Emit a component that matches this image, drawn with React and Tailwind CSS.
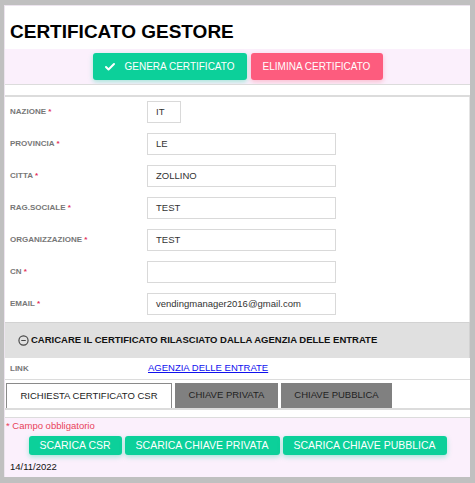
import React from 'react'
import { Check, CircleMinus } from 'lucide-react'

const fields = [
  { label: 'NAZIONE', value: 'IT', short: true },
  { label: 'PROVINCIA', value: 'LE' },
  { label: 'CITTA', value: 'ZOLLINO' },
  { label: 'RAG.SOCIALE', value: 'TEST' },
  { label: 'ORGANIZZAZIONE', value: 'TEST' },
  { label: 'CN', value: '' },
  { label: 'EMAIL', value: 'vendingmanager2016@gmail.com' },
]

function Field({ label, value, short }) {
  return (
    <div className="flex items-center h-[22px]">
      <div className="w-[142px] pl-[5px] text-[8px] font-bold text-[#777]">
        {label} <span className="text-[#e3305a]">*</span>
      </div>
      <div
        className={`h-[22px] border border-[#d9d9d9] pl-[8px] flex items-center text-[9.5px] text-[#333] ${
          short ? 'w-[34px]' : 'w-[189px]'
        }`}
      >
        {value}
      </div>
    </div>
  )
}

export default function App() {
  return (
    <div className="w-[475px] h-[483px] bg-[#c0c0c0] pt-[5px] pl-[4px] pr-[5px] pb-[6px] font-['Liberation_Sans',Arial,sans-serif]">
      <div className="h-full bg-white border-t border-l border-[#ece4ee] flex flex-col">
        <div className="h-[43px] flex items-end pl-[5px] pb-[8px]">
          <h1 className="text-[19px] leading-none font-bold text-black">CERTIFICATO GESTORE</h1>
        </div>

        <div className="h-[35px] bg-[#fbf0fc] flex items-center justify-center gap-[4px]">
          <button className="w-[154px] h-[27px] rounded-[3px] bg-[#0cd09a] text-white text-[10px] flex items-center justify-center gap-[8px] shadow-[0_2px_5px_rgba(12,208,154,0.35)]">
            <Check size={12} strokeWidth={4} />
            GENERA CERTIFICATO
          </button>
          <button className="w-[132px] h-[27px] rounded-[3px] bg-[#fd5c7e] text-white text-[10px] flex items-center justify-center shadow-[0_2px_5px_rgba(253,92,126,0.35)]">
            ELIMINA CERTIFICATO
          </button>
        </div>

        <div className="h-[13px] border-t border-b-2 border-[#dcdcdc] bg-white" />

        <div className="flex flex-col gap-[10px] pt-[4px] pb-[7px] border-r border-[#e4e4e4]">
          {fields.map(f => (
            <Field key={f.label} {...f} />
          ))}
        </div>

        <div className="h-[36px] bg-[#e0e0e0] border-t border-r border-[#d2d2d2] flex items-center pl-[13px] gap-[2px]">
          <CircleMinus size={11} strokeWidth={2.5} className="text-[#444]" />
          <span className="text-[9.5px] font-bold text-[#111]">
            CARICARE IL CERTIFICATO RILASCIATO DALLA AGENZIA DELLE ENTRATE
          </span>
        </div>

        <div className="h-[22px] flex items-center border-b border-[#dcdcdc]">
          <div className="w-[143px] pl-[5px] text-[8px] font-bold text-[#777]">LINK</div>
          <a href="#" className="text-[9.5px] text-[#1010ee] underline">AGENZIA DELLE ENTRATE</a>
        </div>

        <div className="flex items-end gap-[3px] pl-[1px] pt-[3px] border-b-2 border-[#dcdcdc]">
          <div className="w-[166px] h-[25px] border border-[#8a8a8a] border-b-0 bg-white flex items-center justify-center text-[9.5px] text-[#222]">
            RICHIESTA CERTIFICATO CSR
          </div>
          <div className="w-[103px] h-[25px] bg-[#808080] flex items-center justify-center text-[9.5px] text-[#222]">
            CHIAVE PRIVATA
          </div>
          <div className="w-[111px] h-[25px] bg-[#808080] flex items-center justify-center text-[9.5px] text-[#222]">
            CHIAVE PUBBLICA
          </div>
        </div>

        <div className="h-[8px] bg-white border-b border-[#dcdcdc]" />

        <div className="flex-1 bg-[#fbf0fc] flex flex-col pt-[2px]">
          <div className="pl-[1px] text-[9.5px] leading-[12px] text-[#e8435a]">* Campo obbligatorio</div>
          <div className="flex justify-center gap-[3px] mt-[4px]">
            <button className="w-[93px] h-[19px] rounded-[3px] bg-[#0cd09a] text-white text-[10.5px] flex items-center justify-center shadow-[0_2px_5px_rgba(12,208,154,0.35)]">
              SCARICA CSR
            </button>
            <button className="w-[155px] h-[19px] rounded-[3px] bg-[#0cd09a] text-white text-[10.5px] flex items-center justify-center shadow-[0_2px_5px_rgba(12,208,154,0.35)]">
              SCARICA CHIAVE PRIVATA
            </button>
            <button className="w-[164px] h-[19px] rounded-[3px] bg-[#0cd09a] text-white text-[10.5px] flex items-center justify-center shadow-[0_2px_5px_rgba(12,208,154,0.35)]">
              SCARICA CHIAVE PUBBLICA
            </button>
          </div>
          <div className="pl-[5px] mt-[5px] text-[9.5px] text-[#111]">14/11/2022</div>
        </div>
      </div>
    </div>
  )
}
